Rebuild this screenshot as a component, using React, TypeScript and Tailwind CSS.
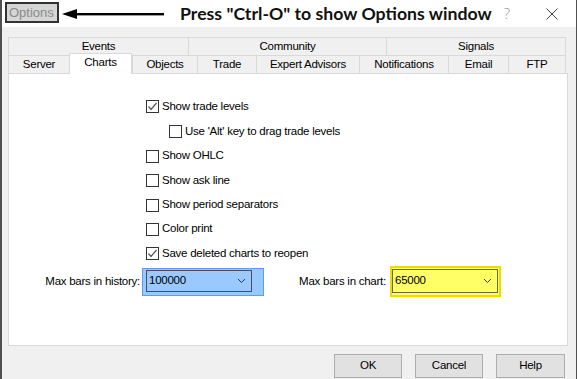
import React from "react";

const Check = ({ checked, label, indent }: { checked: boolean; label: string; indent?: boolean }) => (
  <div className={`flex items-center ${indent ? "pl-[23px]" : ""}`}>
    <div className="w-[13px] h-[13px] border border-[#333] bg-white flex items-center justify-center shrink-0">
      {checked && (
        <svg width="11" height="11" viewBox="0 0 11 11">
          <polyline points="1.5,5.5 4,8.5 9.5,2" fill="none" stroke="#555" strokeWidth="1.2" />
        </svg>
      )}
    </div>
    <span className="ml-[3px] text-black whitespace-nowrap">{label}</span>
  </div>
);

const Chevron = () => (
  <svg width="9" height="6" viewBox="0 0 9 6" className="shrink-0">
    <polyline points="1,1 4.5,4.5 8,1" fill="none" stroke="#333" strokeWidth="1" />
  </svg>
);

export default function App() {
  const rows: { label: string; checked: boolean; indent?: boolean; h: string }[] = [
    { label: "Show trade levels", checked: true, h: "h-[25px]" },
    { label: "Use 'Alt' key to drag trade levels", checked: false, indent: true, h: "h-[25px]" },
    { label: "Show OHLC", checked: false, h: "h-[24px]" },
    { label: "Show ask line", checked: false, h: "h-[25px]" },
    { label: "Show period separators", checked: false, h: "h-[24px]" },
    { label: "Color print", checked: false, h: "h-[24px]" },
    { label: "Save deleted charts to reopen", checked: true, h: "h-[25px]" },
  ];
  const row1 = [
    { t: "Events", w: "w-[180px]" },
    { t: "Community", w: "w-[198px]" },
    { t: "Signals", w: "w-[180px] border-r" },
  ];
  const row2 = [
    { t: "Server", w: "w-[61px]" },
    { t: "Charts", w: "w-[63px]", sel: true },
    { t: "Objects", w: "w-[65px]" },
    { t: "Trade", w: "w-[59px]" },
    { t: "Expert Advisors", w: "w-[103px]" },
    { t: "Notifications", w: "w-[89px]" },
    { t: "Email", w: "w-[60px]" },
    { t: "FTP", w: "w-[58px] border-r" },
  ];
  return (
    <div className="w-[577px] h-[379px] overflow-hidden bg-[#f0f0f0] border-l-2 border-r border-[#505050] flex flex-col font-['Liberation_Sans',sans-serif] text-[11.5px] tracking-[-0.25px] text-black">
      {/* title bar */}
      <div className="h-[27px] bg-white flex items-center shrink-0 tracking-normal">
        <div className="self-start mt-[2px] ml-[3px] w-[54px] h-[21px] border-2 border-[#333] bg-[#d6d6d6] flex items-center pl-[2px] text-[13px] text-[#8a8a8a] leading-none">
          Options
        </div>
        <svg width="102" height="14" viewBox="0 0 102 14" className="ml-[3px] mt-[1px] shrink-0">
          <polygon points="0,7 15,2 15,12" fill="#000" />
          <rect x="14" y="6" width="88" height="2.4" fill="#000" />
        </svg>
        <span className="ml-[16px] font-['Lato',sans-serif] font-bold text-[17.7px] text-[#111] leading-none whitespace-nowrap">
          Press "Ctrl-O" to show Options window
        </span>
        <div className="ml-auto mr-[18px] flex items-center">
          <span className="text-[15px] text-[#9a9a9a] font-['Open_Sans',sans-serif] font-light leading-none">?</span>
          <svg width="12" height="12" viewBox="0 0 12 12" className="ml-[36px]">
            <line x1="0.5" y1="0.5" x2="11.5" y2="11.5" stroke="#444" strokeWidth="1" />
            <line x1="11.5" y1="0.5" x2="0.5" y2="11.5" stroke="#444" strokeWidth="1" />
          </svg>
        </div>
      </div>

      {/* tabs */}
      <div className="ml-[6px] mt-[10px] flex flex-col">
        <div className="flex h-[18px]">
          {row1.map((t) => (
            <div key={t.t} className={`${t.w} h-[18px] border-t border-l border-[#d9d9d9] flex items-center justify-center leading-none`}>
              {t.t}
            </div>
          ))}
        </div>
        <div className="flex items-end h-[20px] -mt-[2px] relative z-10">
          {row2.map((t) =>
            t.sel ? (
              <div key={t.t} className={`${t.w} h-[21px] -mb-[1px] bg-white border-t border-l border-r border-[#d9d9d9] flex items-start pt-[3px] justify-center leading-none`}>
                {t.t}
              </div>
            ) : (
              <div key={t.t} className={`${t.w} h-[18px] border-t border-l border-[#d9d9d9] flex items-center justify-center leading-none`}>
                {t.t}
              </div>
            )
          )}
        </div>
        {/* panel */}
        <div className="w-[560px] h-[273px] bg-white border border-[#d9d9d9] flex flex-col">
          <div className="pt-[20px] pl-[137px] flex flex-col">
            {rows.map((r) => (
              <div key={r.label} className={`${r.h} flex items-center`}>
                <Check checked={r.checked} label={r.label} indent={r.indent} />
              </div>
            ))}
          </div>
          <div className="h-[31px] flex items-center">
            <div className="w-[131px] text-right whitespace-nowrap">Max bars in history:</div>
            <div className="ml-[2px] w-[122px] h-[28px] border border-[#5b9bff] bg-[#99c9ff] pl-[3px] pt-[1px]">
              <div className="w-[106px] h-[22px] border border-[#4d4d4d] flex items-center justify-between pl-[2px] pr-[5px]">
                <span>100000</span>
                <Chevron />
              </div>
            </div>
            <div className="w-[122px] text-right whitespace-nowrap">Max bars in chart:</div>
            <div className="ml-[4px] w-[111px] h-[31px] border-2 border-[#ecdc00] bg-[#ffff66] pt-[1px]">
              <div className="w-[106px] h-[24px] border border-[#6b6b3a] flex items-center justify-between pl-[2px] pr-[5px]">
                <span>65000</span>
                <Chevron />
              </div>
            </div>
          </div>
        </div>
      </div>

      {/* buttons */}
      <div className="mt-[8px] flex justify-end gap-[13px] pr-[11px]">
        <div className="w-[68px] h-[24px] bg-[#e1e1e1] border border-[#adadad] flex items-center justify-center">OK</div>
        <div className="w-[68px] h-[24px] bg-[#e1e1e1] border border-[#adadad] flex items-center justify-center">Cancel</div>
        <div className="w-[69px] h-[24px] bg-[#e1e1e1] border border-[#adadad] flex items-center justify-center">Help</div>
      </div>
    </div>
  );
}
